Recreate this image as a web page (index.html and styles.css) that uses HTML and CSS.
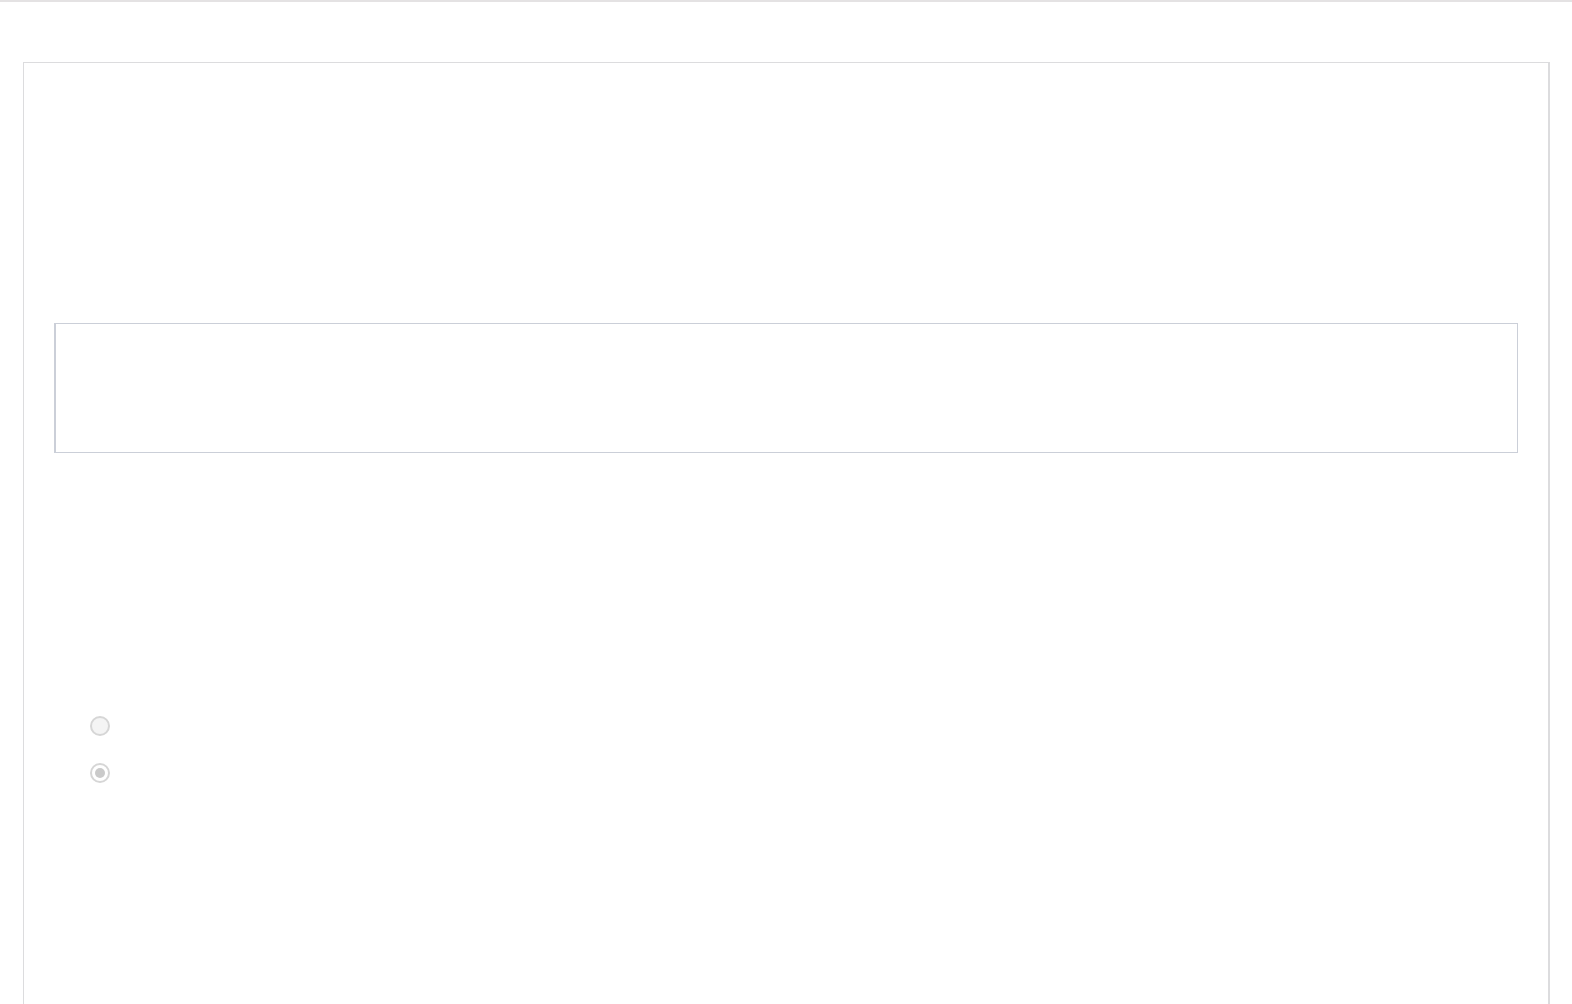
FILE: index.html
```html
<!DOCTYPE html>
<html>
<head>
<meta charset="utf-8">
<link rel="stylesheet" href="styles.css">
</head>
<body>
<div class="topline"></div>
<div class="panel">
  <div class="textbox"></div>
  <div class="options">
    <label class="option"><span class="radio"></span></label>
    <label class="option"><span class="radio checked"></span></label>
  </div>
</div>
</body>
</html>
```
FILE: styles.css
```css
html, body {
  margin: 0;
  padding: 0;
  background: #ffffff;
  font-family: "Liberation Sans", Arial, sans-serif;
  overflow: hidden;
}
.topline {
  height: 2px;
  background: #e4e2e3;
}
.panel {
  margin: 60px 22px 0 23px;
  border: 1px solid #dcdcde;
  border-right-width: 2px;
  height: 1000px;
  padding: 260px 30px 0 30px;
  box-sizing: border-box;
}
.textbox {
  height: 130px;
  border: 1px solid #cbcfd8;
  border-left-width: 2px;
  box-sizing: border-box;
}
.options {
  display: flex;
  flex-direction: column;
  gap: 27px;
  padding: 263px 0 0 36px;
}
.option {
  display: flex;
  align-items: center;
  height: 20px;
}
.radio {
  width: 20px;
  height: 20px;
  box-sizing: border-box;
  border-radius: 50%;
  border: 2px solid #d6d6d6;
  background: #f4f4f4;
  position: relative;
}
.radio.checked {
  background: #ffffff;
}
.radio.checked::after {
  content: "";
  position: absolute;
  left: 3px;
  top: 3px;
  width: 10px;
  height: 10px;
  border-radius: 50%;
  background: #cacaca;
}
```
